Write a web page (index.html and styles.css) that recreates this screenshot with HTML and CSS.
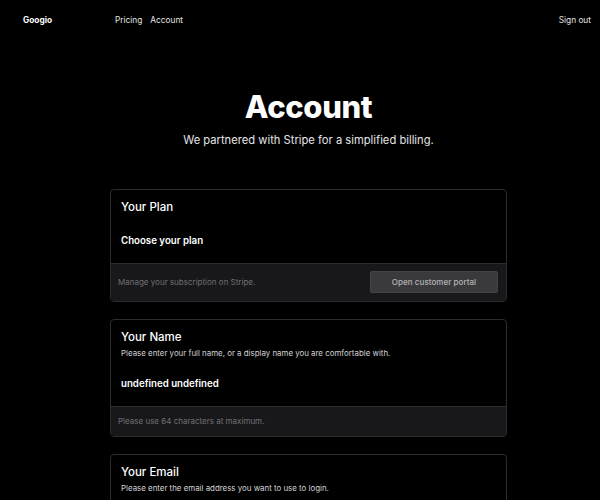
FILE: index.html
```html
<!DOCTYPE html>
<html lang="en">
<head>
<meta charset="utf-8">
<title>Account</title>
<link rel="stylesheet" href="styles.css">
</head>
<body>
<nav class="nav">
  <a class="logo" href="#">Googio</a>
  <div class="links">
    <a href="#">Pricing</a>
    <a href="#">Account</a>
  </div>
  <a class="signout" href="#">Sign out</a>
</nav>
<main class="main">
  <header class="hero">
    <h1 class="title">Account</h1>
    <p class="subtitle">We partnered with Stripe for a simplified billing.</p>
  </header>
  <section class="card">
    <div class="card-body">
      <h3 class="card-title">Your Plan</h3>
      <div class="card-value">Choose your plan</div>
    </div>
    <div class="card-footer footer-row">
      <p class="footer-text">Manage your subscription on Stripe.</p>
      <button class="btn">Open customer portal</button>
    </div>
  </section>
  <section class="card">
    <div class="card-body">
      <h3 class="card-title">Your Name</h3>
      <p class="card-desc">Please enter your full name, or a display name you are comfortable with.</p>
      <div class="card-value">undefined undefined</div>
    </div>
    <div class="card-footer">
      <p class="footer-text">Please use 64 characters at maximum.</p>
    </div>
  </section>
  <section class="card">
    <div class="card-body">
      <h3 class="card-title">Your Email</h3>
      <p class="card-desc">Please enter the email address you want to use to login.</p>
      <div class="card-value">&nbsp;</div>
    </div>
    <div class="card-footer">
      <p class="footer-text">We will email you to verify the change.</p>
    </div>
  </section>
</main>
</body>
</html>
```
FILE: styles.css
```css
* { box-sizing: border-box; }
html, body { margin: 0; padding: 0; background: #000; }
body {
  font-family: Inter, "Noto Sans", sans-serif;
  color: #fff;
}
a { color: inherit; text-decoration: none; }
.nav {
  display: flex;
  align-items: center;
  height: 40px;
  padding: 0 9px 0 23px;
  font-size: 8.3px;
}
.logo { font-weight: 700; width: 92px; }
.links { display: flex; gap: 8px; flex: 1; color: #e4e4e7; }
.signout { color: #e4e4e7; }
.main {
  padding-left: 17px;
  display: flex;
  flex-direction: column;
  align-items: center;
}
.hero { text-align: center; padding-top: 48px; }
.title {
  margin: 0;
  font-size: 31px;
  font-weight: 800;
  line-height: 38px;
  letter-spacing: -0.4px;
}
.subtitle {
  margin: 5px 0 0;
  font-size: 11.2px;
  line-height: 18px;
  color: #e4e4e7;
}
.card {
  width: 397px;
  border: 1px solid #2c2c2f;
  border-radius: 4px;
  margin-top: 17px;
  overflow: hidden;
}
.hero + .card { margin-top: 40px; }
.card-body { padding: 9px 10px 15px; }
.card-title {
  margin: 0;
  font-size: 11.5px;
  font-weight: 500;
  line-height: 16px;
}
.card-desc {
  margin: 1px 0 0;
  font-size: 7.9px;
  line-height: 14px;
  color: #d4d4d8;
}
.card-value {
  margin-top: 16px;
  font-size: 9.7px;
  font-weight: 600;
  line-height: 15px;
}
.card-title + .card-value { margin-top: 18px; }
.card-footer {
  background: #18181a;
  border-top: 1px solid #2c2c2f;
  padding: 8px 8px 8px 7px;
}
.footer-row {
  display: flex;
  align-items: center;
  justify-content: space-between;
  padding-top: 7px;
}
.footer-text {
  margin: 0;
  font-size: 8px;
  line-height: 13px;
  color: #6f6f76;
}
.btn {
  width: 128px;
  height: 22px;
  background: #3a3a3c;
  border: 1px solid #444446;
  border-radius: 2px;
  color: #b4b4b8;
  font-family: inherit;
  font-size: 8.1px;
  font-weight: 500;
  padding: 0;
}
```
